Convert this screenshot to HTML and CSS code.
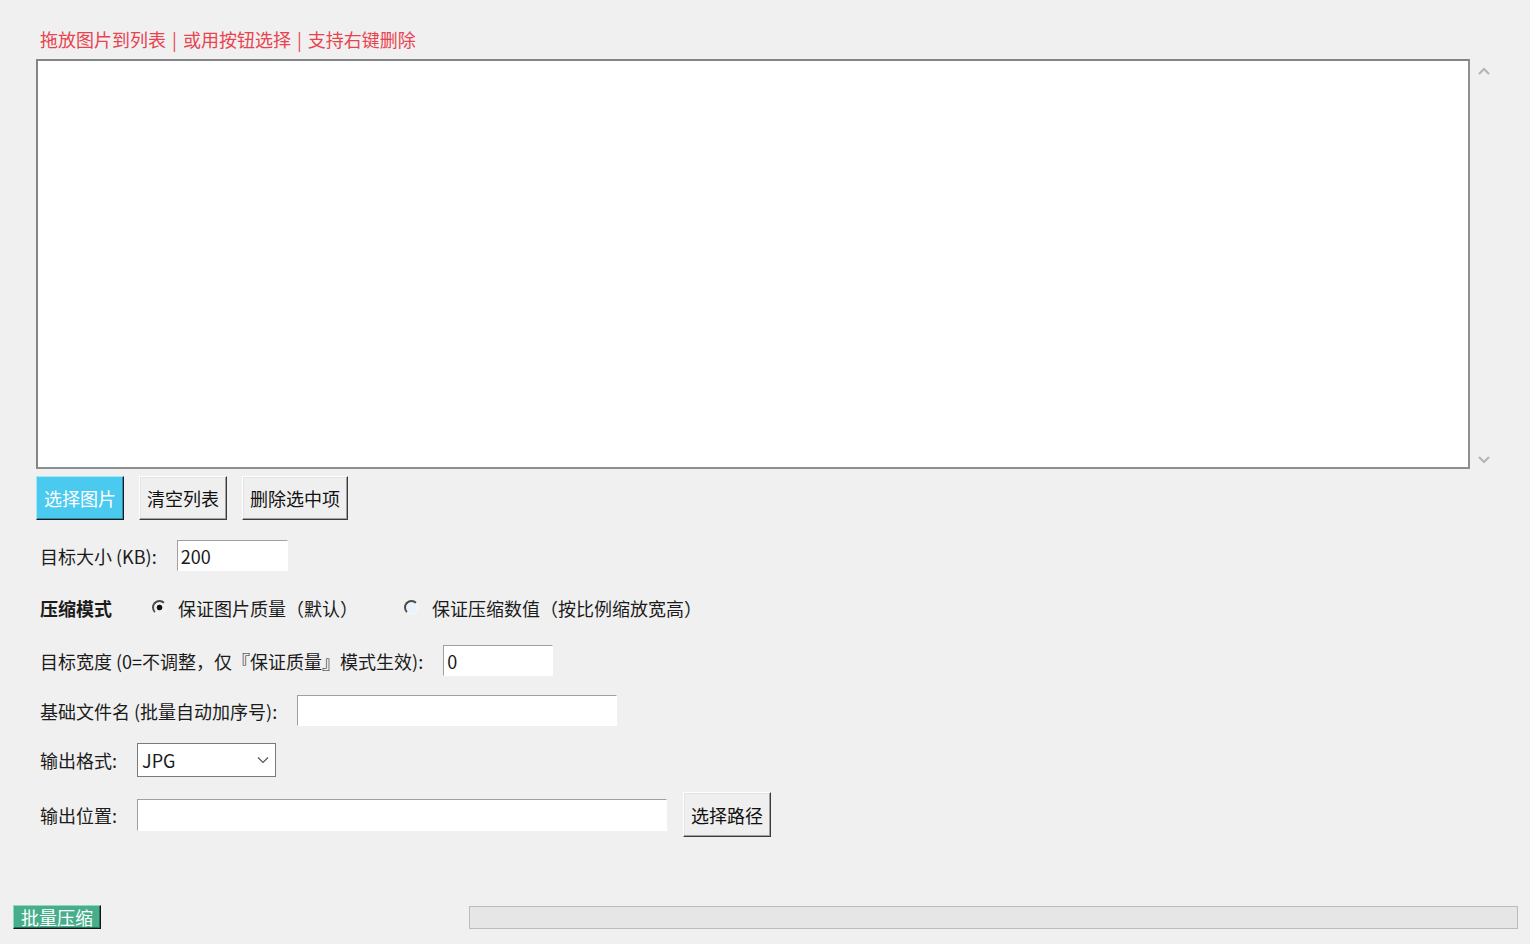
FILE: index.html
```html
<!DOCTYPE html>
<html lang="zh-CN">
<head>
    <meta charset="UTF-8">
    <title>图片批量压缩</title>
    <link rel="stylesheet" href="styles.css">
</head>
<body>
    <div class="main">
        <div class="hint">拖放图片到列表 | 或用按钮选择 | 支持右键删除</div>

        <div class="list-wrap">
            <div class="listbox"></div>
            <div class="scroll-col">
                <svg width="14" height="10" viewBox="0 0 14 10"><path d="M2 8 L7 3 L12 8" fill="none" stroke="#b4b4b4" stroke-width="2"/></svg>
                <svg width="14" height="10" viewBox="0 0 14 10"><path d="M2 2 L7 7 L12 2" fill="none" stroke="#b4b4b4" stroke-width="2"/></svg>
            </div>
        </div>

        <div class="btn-row">
            <button class="btn btn-blue">选择图片</button>
            <button class="btn">清空列表</button>
            <button class="btn">删除选中项</button>
        </div>

        <div class="row row-size">
            <span class="label">目标大小 (KB):</span>
            <input class="field w-size" type="text" value="200">
        </div>

        <div class="row row-mode">
            <span class="label bold">压缩模式</span>
            <label class="radio"><span class="dot checked"></span>保证图片质量（默认）</label>
            <label class="radio second"><span class="dot"></span>保证压缩数值（按比例缩放宽高）</label>
        </div>

        <div class="row row-width">
            <span class="label">目标宽度 (0=不调整，仅『保证质量』模式生效):</span>
            <input class="field w-width" type="text" value="0">
        </div>

        <div class="row row-name">
            <span class="label">基础文件名 (批量自动加序号):</span>
            <input class="field w-name" type="text" value="">
        </div>

        <div class="row row-format">
            <span class="label">输出格式:</span>
            <div class="select">
                <span>JPG</span>
                <svg width="12" height="8" viewBox="0 0 12 8"><path d="M1 1.5 L6 6.5 L11 1.5" fill="none" stroke="#555" stroke-width="1.2"/></svg>
            </div>
        </div>

        <div class="row row-path">
            <span class="label">输出位置:</span>
            <input class="field w-path" type="text" value="">
            <button class="btn btn-path">选择路径</button>
        </div>
    </div>

    <div class="footer">
        <button class="btn-green">批量压缩</button>
        <div class="progress"></div>
    </div>
</body>
</html>
```

FILE: styles.css
```css
* {
    box-sizing: border-box;
}

html, body {
    height: 100%;
}

body {
    margin: 0;
    background-color: #f0f0f0;
    font-family: "Noto Sans CJK SC", "Liberation Sans", sans-serif;
    font-size: 18px;
    color: #1b1b1b;
    display: flex;
    flex-direction: column;
    overflow: hidden;
}

.main {
    padding-left: 36px;
    display: flex;
    flex-direction: column;
    align-items: flex-start;
}

.hint {
    margin-top: 28px;
    margin-left: 4px;
    height: 22px;
    line-height: 22px;
    color: #e9434f;
    white-space: nowrap;
    word-spacing: 2px;
}

.list-wrap {
    margin-top: 9px;
    display: flex;
}

.listbox {
    width: 1434px;
    height: 410px;
    background-color: #ffffff;
    border: 2px solid #858585;
    border-right-color: #8e8e8e;
    border-bottom-color: #8e8e8e;
}

.scroll-col {
    width: 28px;
    display: flex;
    flex-direction: column;
    justify-content: space-between;
    align-items: center;
    padding: 7px 0 4px 0;
}

.btn-row {
    margin-top: 7px;
    display: flex;
    gap: 15px;
}

.btn {
    height: 44px;
    padding: 0 7px;
    font-family: inherit;
    font-size: 18px;
    line-height: 20px;
    color: #111111;
    background-color: #efefef;
    border: 1px solid;
    border-color: #ffffff #3c3c3c #3c3c3c #ffffff;
    box-shadow: inset -1px -1px 0 #a0a0a0, inset 1px 1px 0 #e3e3e3;
    white-space: nowrap;
}

.btn-blue {
    background-color: #4bcaf0;
    color: #ffffff;
    border-color: #a6e6f8 #1c1c1c #1c1c1c #a6e6f8;
    box-shadow: inset -1px -1px 0 #2f8cab;
}

.row {
    display: flex;
    align-items: center;
    gap: 20px;
    white-space: nowrap;
}

.label {
    margin-left: 4px;
    line-height: 22px;
}

.bold {
    font-weight: bold;
}

.field {
    height: 31px;
    padding: 0 3px;
    font-family: inherit;
    font-size: 18px;
    color: #1b1b1b;
    background-color: #ffffff;
    border: 1px solid;
    border-color: #a0a0a0 #ffffff #ffffff #a0a0a0;
    outline: none;
}

.row-size {
    margin-top: 20px;
}

.w-size {
    width: 111px;
}

.row-mode {
    margin-top: 21px;
    height: 31px;
    gap: 0;
}

.radio {
    display: flex;
    align-items: center;
    gap: 11px;
    line-height: 22px;
    margin-left: 40px;
}

.radio.second {
    margin-left: 46px;
    gap: 13px;
}

.dot {
    width: 15px;
    height: 15px;
    border-radius: 50%;
    border: 2px solid;
    border-color: #4a4a4a #f4f4f4 #f4f4f4 #4a4a4a;
    background-color: #eaf3fb;
}

.dot.checked {
    background: radial-gradient(circle, #111 0, #111 2.5px, #eaf3fb 3.2px);
}

.row-width {
    margin-top: 22px;
}

.w-width {
    width: 110px;
}

.row-name {
    margin-top: 19px;
}

.w-name {
    width: 320px;
}

.row-format {
    margin-top: 17px;
}

.select {
    width: 139px;
    height: 34px;
    padding: 0 6px 0 4px;
    display: flex;
    align-items: center;
    justify-content: space-between;
    background-color: #ffffff;
    border: 1px solid #7a7a7a;
}

.row-path {
    margin-top: 15px;
    gap: 0;
}

.row-path .field {
    margin-left: 20px;
}

.w-path {
    width: 530px;
    height: 32px;
}

.btn-path {
    margin-left: 16px;
    height: 45px;
    width: 88px;
}

.footer {
    margin-top: auto;
    padding: 0 12px 15px 13px;
    display: flex;
    justify-content: space-between;
    align-items: center;
}

.btn-green {
    width: 88px;
    height: 24px;
    padding: 0;
    font-family: inherit;
    font-size: 18px;
    line-height: 20px;
    color: #ffffff;
    background-color: #46ae8b;
    border: 1px solid;
    border-color: #8fd8bd #141414 #141414 #8fd8bd;
    box-shadow: inset -1px -1px 0 #2d6e58;
    white-space: nowrap;
}

.progress {
    width: 1049px;
    height: 23px;
    background-color: #e6e6e6;
    border: 1px solid #bcbcbc;
}
```
